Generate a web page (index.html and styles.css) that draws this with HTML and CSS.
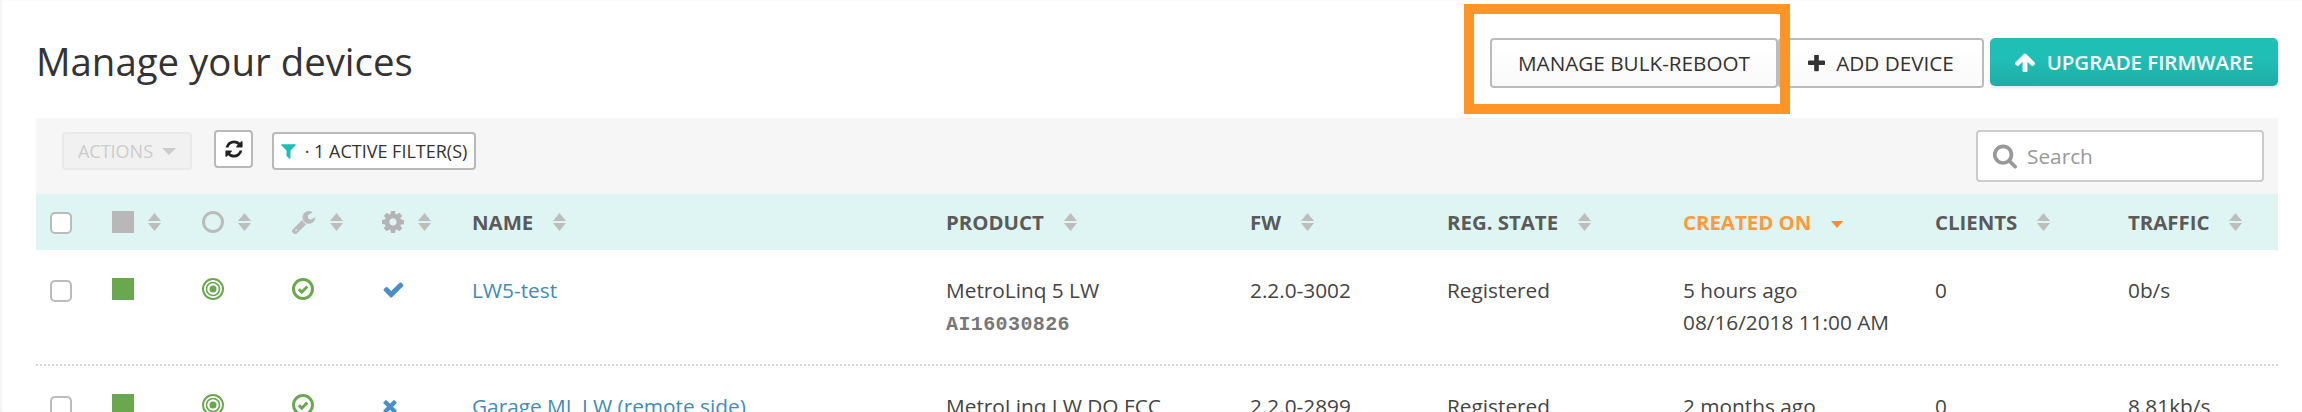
FILE: index.html
```html
<!DOCTYPE html>
<html lang="en">
<head>
<meta charset="utf-8">
<title>Manage your devices</title>
<link rel="stylesheet" href="styles.css">
</head>
<body>
<svg class="defs" width="0" height="0">
  <symbol id="i-check" viewBox="0 0 1792 1792"><path d="M1671 566q0 40-28 68l-724 724-136 136q-28 28-68 28t-68-28l-136-136-362-362q-28-28-28-68t28-68l136-136q28-28 68-28t68 28l294 295 656-657q28-28 68-28t68 28l136 136q28 28 28 68z"/></symbol>
  <symbol id="i-times" viewBox="0 0 1792 1792"><path d="M1490 1322q0 40-28 68l-136 136q-28 28-68 28t-68-28l-294-294-294 294q-28 28-68 28t-68-28l-136-136q-28-28-28-68t28-68l294-294-294-294q-28-28-28-68t28-68l136-136q28-28 68-28t68 28l294 294 294-294q28-28 68-28t68 28l136 136q28 28 28 68t-28 68l-294 294 294 294q28 28 28 68z"/></symbol>
  <symbol id="i-refresh" viewBox="0 0 1792 1792"><path d="M1639 1056q0 5-1 7-64 268-268 434.500t-478 166.500q-146 0-282.500-55t-243.500-157l-129 129q-19 19-45 19t-45-19-19-45v-448q0-26 19-45t45-19h448q26 0 45 19t19 45-19 45l-137 137q71 66 161 102t187 36q134 0 250-65t186-179q11-17 53-117 8-23 30-23h192q13 0 22.500 9.500t9.500 22.500zm25-800v448q0 26-19 45t-45 19h-448q-26 0-45-19t-19-45 19-45l138-138q-148-137-349-137-134 0-250 65t-186 179q-11 17-53 117-8 23-30 23h-199q-13 0-22.500-9.500t-9.500-22.500v-7q65-268 270-434.500t480-166.500q146 0 284 55.500t245 156.500l130-129q19-19 45-19t45 19 19 45z"/></symbol>
  <symbol id="i-wrench" viewBox="128 128 1616 1616"><path d="M448 1472q0-26-19-45t-45-19-45 19-19 45 19 45 45 19 45-19 19-45zm644-420l-682 682q-37 37-90 37-52 0-91-37l-106-108q-38-36-38-90 0-53 38-91l681-681q39 98 114.500 173.500t173.500 114.500zm634-435q0 39-23 106-47 134-164.500 217.500t-258.500 83.500q-185 0-316.500-131.500t-131.500-316.500 131.500-316.500 316.500-131.500q58 0 121.500 16.500t107.500 46.500q16 11 16 28t-16 28l-293 169v224l193 107q5-3 79-48.500t135.500-81 70.500-35.500q15 0 23.500 10t8.500 25z"/></symbol>
  <symbol id="i-cog" viewBox="128 128 1536 1536"><path d="M1152 896q0-106-75-181t-181-75-181 75-75 181 75 181 181 75 181-75 75-181zm512-109v222q0 12-8 23t-20 13l-185 28q-19 54-39 91 35 50 107 138 10 12 10 25t-9 23q-27 37-99 108t-94 71q-12 0-26-9l-138-108q-44 23-91 38-16 136-29 186-7 28-36 28h-222q-14 0-24.500-8.500t-11.500-21.500l-28-184q-49-16-90-37l-141 107q-10 9-25 9-14 0-25-11-126-114-165-168-7-10-7-23 0-12 8-23 15-21 51-66.500t54-70.500q-27-50-41-99l-183-27q-13-2-21-12.500t-8-23.500v-222q0-12 8-23t19-13l186-28q14-46 39-92-40-57-107-138-10-12-10-24 0-10 9-23 26-36 98.500-107.500t94.500-71.500q13 0 26 10l138 107q44-23 91-38 16-136 29-186 7-28 36-28h222q14 0 24.500 8.500t11.500 21.500l28 184q49 16 90 37l142-107q9-9 24-9 13 0 25 10 129 119 165 170 7 8 7 22 0 12-8 23-15 21-51 66.500t-54 70.500q26 50 41 98l183 28q13 2 21 12.500t8 23.500z"/></symbol>
  <symbol id="i-search" viewBox="0 128 1728 1664"><path d="M1216 832q0-185-131.500-316.500t-316.500-131.500-316.500 131.500-131.500 316.500 131.500 316.500 316.500 131.500 316.500-131.500 131.500-316.500zm512 832q0 52-38 90t-90 38q-54 0-90-38l-343-342q-179 124-399 124-143 0-273.500-55.500t-225-150-150-225-55.500-273.500 55.500-273.500 150-225 225-150 273.500-55.500 273.500 55.500 225 150 150 225 55.500 273.500q0 220-124 399l343 343q37 37 37 90z"/></symbol>
  <symbol id="i-filter" viewBox="180 256 1432 1408"><path d="M1595 295q17 41-14 70l-493 493v742q0 42-39 59-13 5-25 5-27 0-45-19l-256-256q-19-19-19-45v-486l-493-493q-31-29-14-70 17-39 59-39h1280q42 0 59 39z"/></symbol>
  <symbol id="i-plus" viewBox="192 192 1408 1408"><path d="M1600 736v192q0 40-28 68t-68 28h-416v416q0 40-28 68t-68 28h-192q-40 0-68-28t-28-68v-416h-416q-40 0-68-28t-28-68v-192q0-40 28-68t68-28h416v-416q0-40 28-68t68-28h192q40 0 68 28t28 68v416h416q40 0 68 28t28 68z"/></symbol>
  <symbol id="i-arrow" viewBox="117 192 1558 1408"><path d="M1675 971q0 51-37 90l-75 75q-38 38-91 38-54 0-90-38l-294-293v704q0 52-37.500 84.500t-90.500 32.500h-128q-53 0-90.500-32.500t-37.500-84.500v-704l-294 293q-36 38-90 38t-90-38l-75-75q-38-38-38-90 0-53 38-91l651-651q35-37 90-37 54 0 91 37l651 651q37 39 37 91z"/></symbol>
  <symbol id="i-sort" viewBox="0 0 13 18"><path d="M6.500 0 13 8H0zM0 10h13l-6.500 8z"/></symbol>
  <symbol id="i-target" viewBox="0 0 22 22"><circle cx="11" cy="11" r="10" fill="none" stroke="currentColor" stroke-width="2"/><circle cx="11" cy="11" r="6.500" fill="none" stroke="currentColor" stroke-width="1.600"/><circle cx="11" cy="11" r="3.500" fill="currentColor"/></symbol>
  <symbol id="i-okcircle" viewBox="0 0 22 22"><circle cx="11" cy="11" r="9.500" fill="none" stroke="currentColor" stroke-width="3"/><path d="M6.800 11.200 9.800 14.200 15.300 8.500" fill="none" stroke="currentColor" stroke-width="3"/></symbol>
</svg>

<header class="page-head">
  <h1 class="title">Manage your devices</h1>
  <div class="actions">
    <button class="btn btn-manage">MANAGE BULK-REBOOT</button>
    <button class="btn btn-add"><svg class="ic-plus"><use href="#i-plus"/></svg>ADD DEVICE</button>
    <button class="btn btn-upgrade"><svg class="ic-arrow"><use href="#i-arrow"/></svg>UPGRADE FIRMWARE</button>
    <div class="highlight"></div>
  </div>
</header>

<main class="panel">
  <div class="toolbar">
    <div class="tool tool-actions">ACTIONS<span class="caret"></span></div>
    <div class="tool tool-refresh"><svg class="ic-refresh"><use href="#i-refresh"/></svg></div>
    <div class="tool tool-filter"><svg class="ic-filter"><use href="#i-filter"/></svg>· 1 ACTIVE FILTER(S)</div>
    <div class="search"><svg class="ic-search"><use href="#i-search"/></svg><span>Search</span></div>
  </div>

  <div class="grid-row head-row">
    <div class="th"><input type="checkbox" class="check"></div>
    <div class="th th-icon"><span class="square square-grey"></span><svg class="sort"><use href="#i-sort"/></svg></div>
    <div class="th th-icon"><span class="ring"></span><svg class="sort"><use href="#i-sort"/></svg></div>
    <div class="th th-icon"><svg class="ic-wrench"><use href="#i-wrench"/></svg><svg class="sort"><use href="#i-sort"/></svg></div>
    <div class="th th-icon"><svg class="ic-cog"><use href="#i-cog"/></svg><svg class="sort"><use href="#i-sort"/></svg></div>
    <div class="th">NAME<svg class="sort"><use href="#i-sort"/></svg></div>
    <div class="th">PRODUCT<svg class="sort"><use href="#i-sort"/></svg></div>
    <div class="th">FW<svg class="sort"><use href="#i-sort"/></svg></div>
    <div class="th">REG. STATE<svg class="sort"><use href="#i-sort"/></svg></div>
    <div class="th th-active">CREATED ON<span class="caret caret-active"></span></div>
    <div class="th">CLIENTS<svg class="sort"><use href="#i-sort"/></svg></div>
    <div class="th">TRAFFIC<svg class="sort"><use href="#i-sort"/></svg></div>
  </div>

  <div class="grid-row data-row">
    <div class="td td-icon"><input type="checkbox" class="check"></div>
    <div class="td td-icon"><span class="square square-green"></span></div>
    <div class="td td-icon"><svg class="ic-status"><use href="#i-target"/></svg></div>
    <div class="td td-icon"><svg class="ic-status"><use href="#i-okcircle"/></svg></div>
    <div class="td td-icon"><svg class="ic-yes"><use href="#i-check"/></svg></div>
    <div class="td"><a class="link">LW5-test</a></div>
    <div class="td">MetroLinq 5 LW<div class="serial">AI16030826</div></div>
    <div class="td">2.2.0-3002</div>
    <div class="td">Registered</div>
    <div class="td">5 hours ago<br>08/16/2018 11:00 AM</div>
    <div class="td">0</div>
    <div class="td">0b/s</div>
  </div>

  <div class="grid-row data-row">
    <div class="td td-icon"><input type="checkbox" class="check"></div>
    <div class="td td-icon"><span class="square square-green"></span></div>
    <div class="td td-icon"><svg class="ic-status"><use href="#i-target"/></svg></div>
    <div class="td td-icon"><svg class="ic-status"><use href="#i-okcircle"/></svg></div>
    <div class="td td-icon"><svg class="ic-no"><use href="#i-times"/></svg></div>
    <div class="td"><a class="link">Garage ML LW (remote side)</a></div>
    <div class="td">MetroLinq LW DO FCC</div>
    <div class="td">2.2.0-2899</div>
    <div class="td">Registered</div>
    <div class="td">2 months ago</div>
    <div class="td">0</div>
    <div class="td">8.81kb/s</div>
  </div>
</main>
</body>
</html>
```

FILE: styles.css
```css
* { box-sizing: border-box; }
html, body { margin: 0; height: 412px; overflow: hidden; background: #fff; }
body { font-family: "Open Sans", "Liberation Sans", sans-serif; color: #444; font-size: 20.8px; box-shadow: inset 2px 0 2px #f4f4f4; }
.defs { display: block; height: 0; }
svg { display: block; fill: currentColor; flex: none; }

.page-head { display: flex; justify-content: space-between; height: 118px; padding: 38px 24px 0 36px; }
.title { margin: 0; font-size: 38.4px; font-weight: 400; line-height: 46px; color: #333; }
.actions { display: flex; position: relative; align-items: flex-start; }
.btn { font-family: inherit; font-size: 20.7px; height: 50px; padding: 0; border: 2px solid #bbb; border-radius: 4px; background: linear-gradient(#fff, #fafafa); color: #333; display: flex; align-items: center; justify-content: center; }
.btn-manage { width: 288px; }
.btn-add { width: 206px; margin-right: 6px; gap: 11px; }
.btn-upgrade { width: 288px; height: 48px; border: 0; border-radius: 5px; background: linear-gradient(#20bfb6 40%, #1dada5); color: #fff; gap: 12px; font-weight: 600; font-size: 20.4px; box-shadow: 0 2px 3px rgba(0,0,0,.1); }
.ic-plus { width: 17px; height: 17px; color: #333; }
.ic-arrow { width: 20px; height: 19px; }
.highlight { position: absolute; left: -26px; top: -34px; width: 326px; height: 110px; border: 10px solid #ff9527; pointer-events: none; }

.panel { margin: 0 24px 0 36px; }
.toolbar { display: flex; align-items: flex-start; height: 76px; padding: 14px 14px 0 26px; background: #f6f6f6; }
.tool { display: flex; align-items: center; justify-content: center; height: 38px; border: 2px solid #b9b9b9; border-radius: 4px; background: #fff; font-size: 18px; color: #333; white-space: nowrap; }
.tool-actions { width: 130px; background: #f1f1f1; border-color: #e9e9e9; color: #ccc; gap: 9px; margin-right: 22px; }
.tool-refresh { width: 39px; margin-top: -2px; margin-right: 19px; }
.tool-filter { width: 204px; gap: 9px; }
.ic-refresh { width: 20px; height: 20px; color: #222; }
.ic-filter { width: 15px; height: 15px; color: #20bdb4; }
.caret { display: block; width: 0; height: 0; border: 7px solid transparent; border-top-color: #ccc; border-bottom: 0; }
.search { margin-left: auto; margin-top: -2px; width: 288px; height: 52px; display: flex; align-items: center; gap: 10px; padding-left: 14px; background: #fff; border: 2px solid #ccc; border-radius: 4px; color: #999; font-size: 20.8px; }
.ic-search { width: 25px; height: 25px; color: #999; }

.grid-row { display: grid; grid-template-columns: 62px 90px 90px 90px 90px 474px 304px 197px 236px 252px 193px 136px; padding-left: 14px; }
.head-row { height: 56px; background: #dff5f3; }
.th { display: flex; align-items: center; gap: 20px; font-size: 20.4px; font-weight: 700; color: #5a5a5a; white-space: nowrap; }
.th-icon { gap: 14px; }
.th-active { color: #ff9a3c; }
.caret-active { border-width: 7px 6.500px 0; border-top-color: #ff8c26; margin-top: 5px; }
.sort { width: 13px; height: 18px; color: #bdbdbd; }
.check { appearance: none; display: block; width: 22px; height: 22px; margin: 2px 0 0; background: #fff; border: 2px solid #bbb; border-radius: 5px; }
.square { display: block; width: 22px; height: 22px; }
.square-grey { background: #b8b8b8; }
.square-green { background: #6aa84f; }
.ring { display: block; width: 22px; height: 22px; border: 3px solid #bbb; border-radius: 50%; }
.ic-wrench { width: 24px; height: 23px; color: #bbb; }
.ic-cog { width: 22px; height: 22px; color: #b4b4b4; }

.data-row { height: 116px; border-bottom: 2px dotted #d6d6d6; }
.td { padding-top: 24px; line-height: 32px; white-space: nowrap; }
.td-icon { padding-top: 28px; line-height: 0; }
.ic-status { width: 22px; height: 22px; color: #6aa84f; }
.ic-yes { width: 23px; height: 23px; color: #4a8ec9; }
.ic-no { width: 20px; height: 20px; margin: 2px 0 0 -2px; color: #4a8ec9; }
.link { color: #428bb5; }
.serial { font-family: "Liberation Mono", monospace; font-weight: 700; font-size: 20px; letter-spacing: .4px; color: #777; margin-top: 3px; }
```
